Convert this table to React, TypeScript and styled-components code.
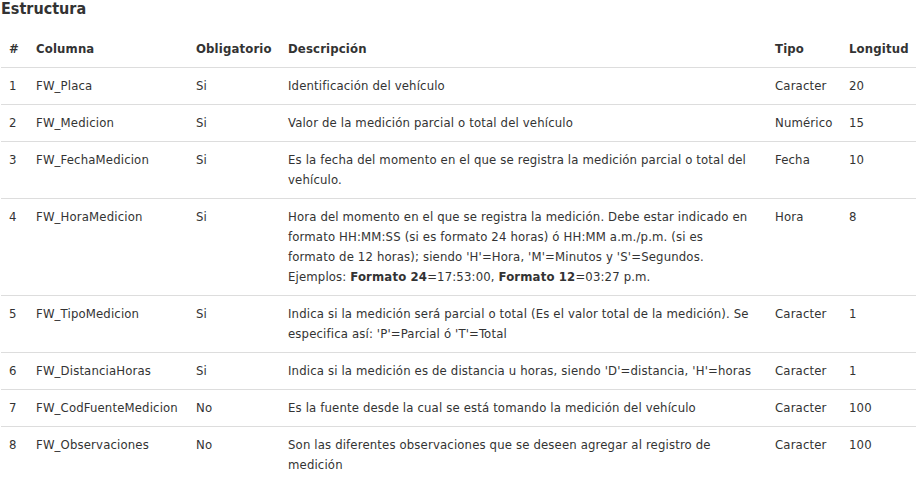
import React from "react";
import styled, { createGlobalStyle } from "styled-components";

const Global = createGlobalStyle`
  html, body { margin: 0; padding: 0; background: #fff; }
  body { font-family: "DejaVu Sans Condensed", "DejaVu Sans", Verdana, sans-serif; color: #333; }
`;

const Page = styled.div`
  padding: 0 3px 0 1px;
`;

const Title = styled.h4`
  margin: 0 0 13px 0;
  font-size: 16px;
  line-height: 18px;
  font-weight: bold;
  color: #333;
`;

const Table = styled.table`
  width: 915px;
  border-collapse: collapse;
  table-layout: fixed;
  font-size: 13px;
  line-height: 20px;
  letter-spacing: 0.15px;
`;

const Th = styled.th<{ $w: number }>`
  box-sizing: border-box;
  width: ${(p) => p.$w}px;
  text-align: left;
  padding: 8px;
  font-weight: bold;
  border-bottom: 1px solid #ddd;
  vertical-align: bottom;
`;

const Td = styled.td`
  padding: 8px;
  vertical-align: top;
  border-top: 1px solid #ddd;
`;

const Row = styled.tr`
  &:first-child td { border-top: none; }
`;

type R = { n: number; col: string; ob: string; desc: React.ReactNode; tipo: string; len: string };

const rows: R[] = [
  { n: 1, col: "FW_Placa", ob: "Si", desc: "Identificación del vehículo", tipo: "Caracter", len: "20" },
  { n: 2, col: "FW_Medicion", ob: "Si", desc: "Valor de la medición parcial o total del vehículo", tipo: "Numérico", len: "15" },
  { n: 3, col: "FW_FechaMedicion", ob: "Si", desc: "Es la fecha del momento en el que se registra la medición parcial o total del vehículo.", tipo: "Fecha", len: "10" },
  {
    n: 4,
    col: "FW_HoraMedicion",
    ob: "Si",
    desc: (
      <>
        Hora del momento en el que se registra la medición. Debe estar indicado en formato HH:MM:SS (si es formato 24 horas) ó HH:MM a.m./p.m. (si es
        <br />
        formato de 12 horas); siendo 'H'=Hora, 'M'=Minutos y 'S'=Segundos.
        <br />
        Ejemplos: <b>Formato 24</b>=17:53:00, <b>Formato 12</b>=03:27 p.m.
      </>
    ),
    tipo: "Hora",
    len: "8",
  },
  { n: 5, col: "FW_TipoMedicion", ob: "Si", desc: "Indica si la medición será parcial o total (Es el valor total de la medición). Se especifica así: 'P'=Parcial ó 'T'=Total", tipo: "Caracter", len: "1" },
  { n: 6, col: "FW_DistanciaHoras", ob: "Si", desc: "Indica si la medición es de distancia u horas, siendo 'D'=distancia, 'H'=horas", tipo: "Caracter", len: "1" },
  { n: 7, col: "FW_CodFuenteMedicion", ob: "No", desc: "Es la fuente desde la cual se está tomando la medición del vehículo", tipo: "Caracter", len: "100" },
  { n: 8, col: "FW_Observaciones", ob: "No", desc: "Son las diferentes observaciones que se deseen agregar al registro de medición", tipo: "Caracter", len: "100" },
];

export default function App() {
  return (
    <Page>
      <Global />
      <Title>Estructura</Title>
      <Table>
        <thead>
          <tr>
            <Th $w={27}>#</Th>
            <Th $w={160}>Columna</Th>
            <Th $w={92}>Obligatorio</Th>
            <Th $w={487}>Descripción</Th>
            <Th $w={74}>Tipo</Th>
            <Th $w={75}>Longitud</Th>
          </tr>
        </thead>
        <tbody>
          {rows.map((r) => (
            <Row key={r.n}>
              <Td>{r.n}</Td>
              <Td>{r.col}</Td>
              <Td>{r.ob}</Td>
              <Td>{r.desc}</Td>
              <Td>{r.tipo}</Td>
              <Td>{r.len}</Td>
            </Row>
          ))}
        </tbody>
      </Table>
    </Page>
  );
}
